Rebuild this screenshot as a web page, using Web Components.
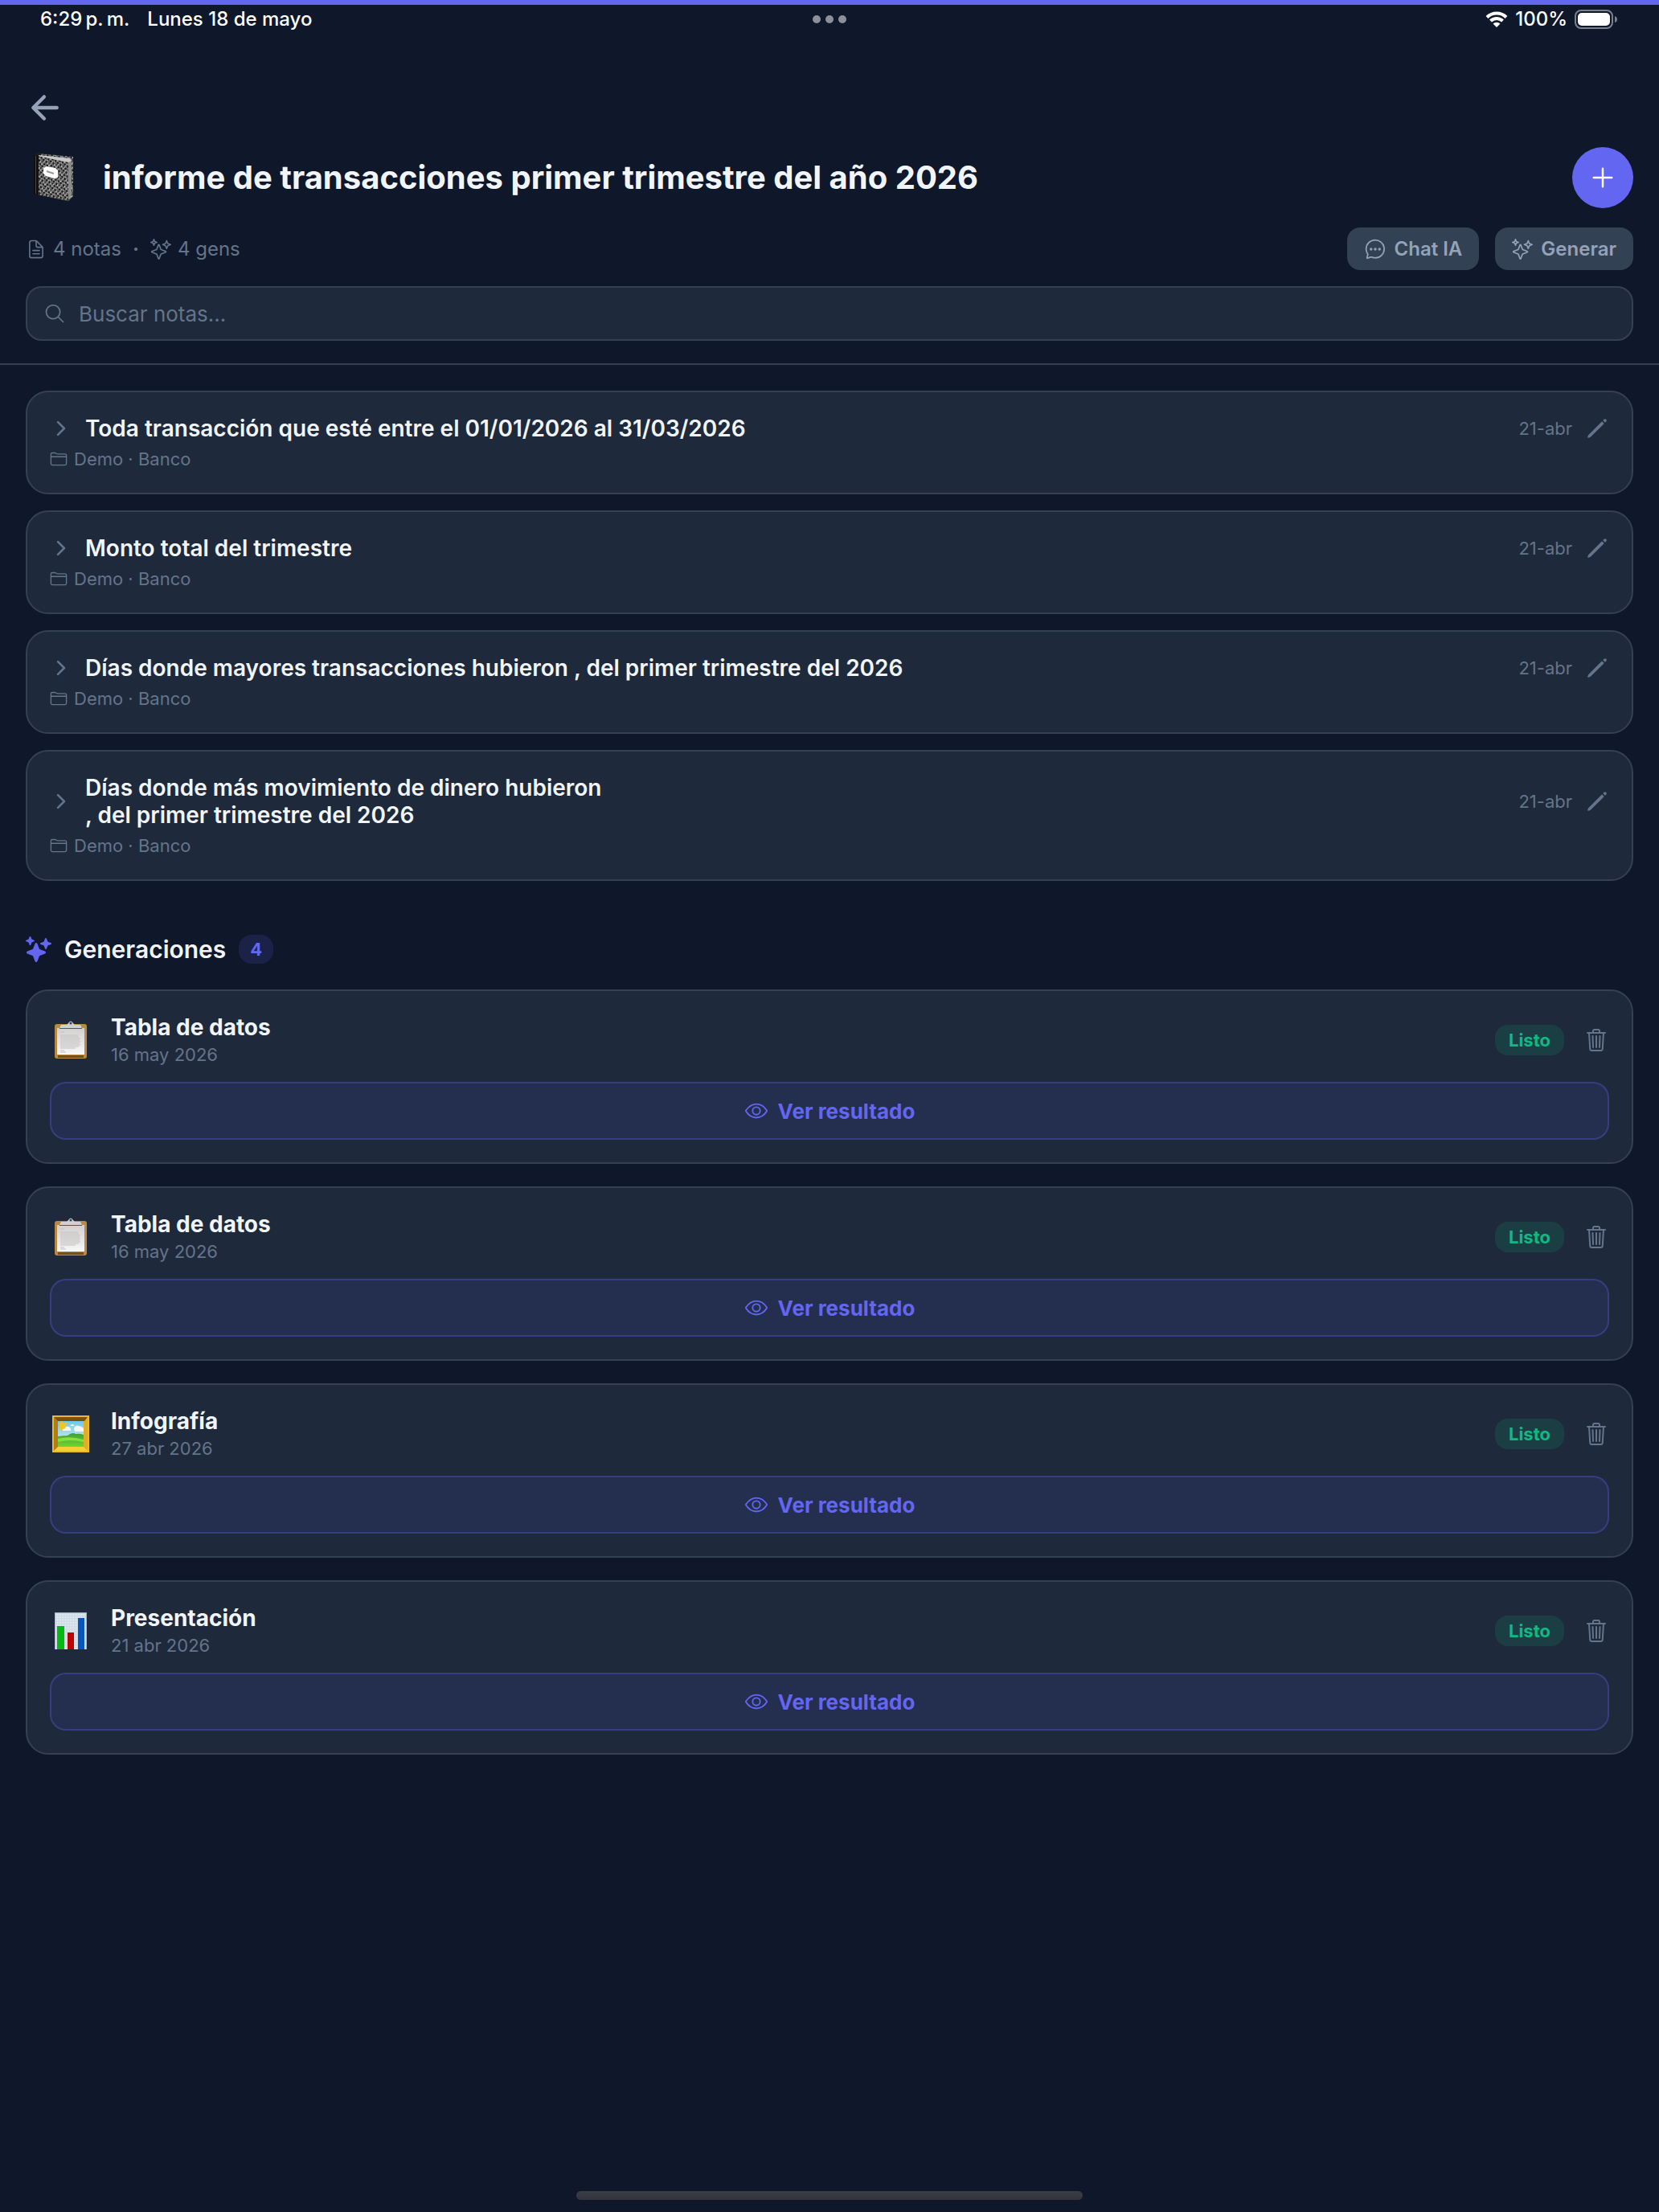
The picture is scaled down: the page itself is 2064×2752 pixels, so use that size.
<!DOCTYPE html>
<html lang="es">
<head>
<meta charset="utf-8">
<meta name="viewport" content="width=device-width, initial-scale=1">
<title>Cuaderno</title>
<style>
    html {
        background: #0f172a;
    }
    body {
        margin: 0;
        font-family: Inter, "Liberation Sans", sans-serif;
        color: #f1f5f9;
        --bg: #0f172a;
        --card: #1e293b;
        --border: #334155;
        --muted: #64748b;
        --soft: #94a3b8;
        --accent: #6366f1;
    }
</style>
</head>
<body>
<notebook-app>
    <status-bar slot="status" time="6:29&#8201;p.&#8201;m." date="Lunes 18 de mayo" battery="100%"></status-bar>
    <notebook-header slot="header" notes="4" gens="4">informe de transacciones primer trimestre del año 2026</notebook-header>

    <note-card folder="Demo · Banco" date="21-abr">Toda transacción que esté entre el 01/01/2026 al 31/03/2026</note-card>
    <note-card folder="Demo · Banco" date="21-abr">Monto total del trimestre</note-card>
    <note-card folder="Demo · Banco" date="21-abr">Días donde mayores transacciones hubieron , del primer trimestre del 2026</note-card>
    <note-card folder="Demo · Banco" date="21-abr">Días donde más movimiento de dinero hubieron<br>, del primer trimestre del 2026</note-card>

    <generation-list slot="generations" count="4">
        <generation-card icon="clipboard" date="16 may 2026">Tabla de datos</generation-card>
        <generation-card icon="clipboard" date="16 may 2026">Tabla de datos</generation-card>
        <generation-card icon="picture" date="27 abr 2026">Infografía</generation-card>
        <generation-card icon="chart" date="21 abr 2026">Presentación</generation-card>
    </generation-list>
</notebook-app>

<script>
// line icons, drawn on a 512 grid
const ICONS = {
    back: '<g stroke-width="48"><path d="M244 400 100 256 244 112"/><path d="M120 256H412"/></g>',
    add: '<path d="M256 112V400M400 256H112"/>',
    document: '<path d="M416 221.25V416a48 48 0 0 1-48 48H144a48 48 0 0 1-48-48V96a48 48 0 0 1 48-48h98.75a32 32 0 0 1 22.62 9.37l141.26 141.26A32 32 0 0 1 416 221.25Z"/><path d="M256 56v120a32 32 0 0 0 32 32h120M176 288h160M176 368h160"/>',
    sparkles: '<path d="M259.92 262.91 216.4 149.77a9 9 0 0 0-16.8 0l-43.52 113.14a9 9 0 0 1-5.17 5.17L37.77 311.6a9 9 0 0 0 0 16.8l113.14 43.52a9 9 0 0 1 5.17 5.17l43.52 113.14a9 9 0 0 0 16.8 0l43.52-113.14a9 9 0 0 1 5.17-5.17l113.14-43.52a9 9 0 0 0 0-16.8l-113.14-43.52a9 9 0 0 1-5.17-5.17Z"/><path d="M108 68 88 16 68 68 16 88l52 20 20 52 20-52 52-20ZM426.67 117.33 400 48l-26.67 69.33L304 144l69.33 26.67L400 240l26.67-69.33L496 144Z"/>',
    sparklesFill: '<g fill="currentColor" stroke="none"><path d="M208 512a24.84 24.84 0 0 1-23.34-16l-39.84-103.6a16.06 16.06 0 0 0-9.19-9.19L32 343.34a25 25 0 0 1 0-46.68l103.6-39.84a16.06 16.06 0 0 0 9.19-9.19L184.66 144a25 25 0 0 1 46.68 0l39.84 103.6a16.06 16.06 0 0 0 9.19 9.19l103 39.63A25.49 25.49 0 0 1 400 320.52a24.82 24.82 0 0 1-16 22.82l-103.6 39.84a16.06 16.06 0 0 0-9.19 9.19L231.34 496A24.84 24.84 0 0 1 208 512Z"/><path d="M88 176a14.67 14.67 0 0 1-13.69-9.4l-16.86-43.84a7.28 7.28 0 0 0-4.21-4.21L9.4 101.69a14.67 14.67 0 0 1 0-27.38l43.84-16.86a7.31 7.31 0 0 0 4.21-4.21L74.16 9.79A15 15 0 0 1 86.23.11a14.67 14.67 0 0 1 15.46 9.29l16.86 43.84a7.31 7.31 0 0 0 4.21 4.21l43.84 16.86a14.67 14.67 0 0 1 0 27.38l-43.84 16.86a7.28 7.28 0 0 0-4.21 4.21l-16.86 43.84A14.67 14.67 0 0 1 88 176Z"/><path d="M400 256a16 16 0 0 1-14.93-10.26l-22.84-59.37a8 8 0 0 0-4.6-4.6l-59.37-22.84a16 16 0 0 1 0-29.86l59.37-22.84a8 8 0 0 0 4.6-4.6l22.67-58.95a16.45 16.45 0 0 1 13.17-10.57 16 16 0 0 1 16.86 10.15l22.84 59.37a8 8 0 0 0 4.6 4.6l59.37 22.84a16 16 0 0 1 0 29.86l-59.37 22.84a8 8 0 0 0-4.6 4.6l-22.84 59.37A16 16 0 0 1 400 256Z"/></g>',
    chat: '<path d="M87.48 380c1.2-4.38-1.43-10.47-3.94-14.86a42.63 42.63 0 0 0-2.54-3.8A199.81 199.81 0 0 1 48 250.2C47.72 139.13 139.6 48 253.52 48 352.71 48 435.41 117.55 454.7 210.24A203 203 0 0 1 459 251.67c0 111.37-88.78 202.92-202.59 202.92-18.2 0-42.12-4.55-55.26-8.2s-26.2-8.46-29.56-9.78a31.08 31.08 0 0 0-11.13-2.06 30.09 30.09 0 0 0-12.08 2.43L81.21 462a15.84 15.84 0 0 1-4.61 1.22 9.61 9.61 0 0 1-9.58-9.74 15.85 15.85 0 0 1 .6-3.29Z"/><g fill="currentColor" stroke="none"><circle cx="160" cy="256" r="32"/><circle cx="256" cy="256" r="32"/><circle cx="352" cy="256" r="32"/></g>',
    search: '<circle cx="221" cy="221" r="157"/><path d="M338.3 338.3 448 448"/>',
    chevron: '<path stroke-width="48" d="m184 112 144 144-144 144"/>',
    folder: '<path d="M440 432H72a40 40 0 0 1-40-40V120a40 40 0 0 1 40-40h75.89a40 40 0 0 1 22.19 6.72l27.84 18.56a40 40 0 0 0 22.19 6.72H440a40 40 0 0 1 40 40v240a40 40 0 0 1-40 40ZM32 192h448"/>',
    pencil: '<g fill="currentColor"><path d="M358.62 129.28 86.49 402.08 70 442l39.92-16.49 272.8-272.13Z"/><path d="m413.07 74.84-11.79 11.78 24.1 24.1 11.79-11.79a16.51 16.51 0 0 0 0-23.34l-.75-.75a16.51 16.51 0 0 0-23.35 0Z"/></g>',
    trash: '<path d="m112 112 20 320c.95 18.49 14.4 32 32 32h184c17.67 0 30.87-13.51 32-32l20-320M80 112h352M192 112V72a23.93 23.93 0 0 1 24-24h80a23.93 23.93 0 0 1 24 24v40M256 176v224M184 176l8 224M328 176l-8 224"/>',
    eye: '<path d="M255.66 112c-77.94 0-157.89 45.11-220.83 135.33a16 16 0 0 0-.27 17.77C82.92 340.8 161.8 400 255.66 400c92.84 0 173.34-59.38 221.79-135.25a16.14 16.14 0 0 0 0-17.47C428.89 172.28 347.8 112 255.66 112Z"/><circle cx="256" cy="256" r="80"/>'
};

// colour pictures, each on its own grid
const PICTURES = {
    notebook: `
        <svg viewBox="0 0 52 64" width="52" height="64">
            <defs>
                <pattern id="speckle" width="9" height="8" patternUnits="userSpaceOnUse" patternTransform="rotate(12)">
                    <rect width="9" height="8" fill="#6b6b6b"/>
                    <path fill="#171717" d="M0 0h2v2H0zM4 1h2v1H4zM7 3h2v2H7zM2 4h2v2H2zM5 6h2v2H5zM0 7h1v1H0z"/>
                    <path fill="#d4d4d4" d="M2 1h1v2H2zM6 2h1v1H6zM4 4h2v1H4zM1 6h1v1H1zM8 6h1v1H8zM7 0h1v1H7z"/>
                </pattern>
            </defs>
            <path fill="#1b1b1b" d="M4 1 50 6V55L44 62 1 52V4Z"/>
            <path fill="url(#speckle)" d="m8 2 42 4v49l-6 6Z"/>
            <path fill="#c8c8c8" d="M7 4 46 8l2 3v45l-4 3-1-46L7 7Z"/>
            <path fill="#8b8b8b" d="m44 13 4-2v44l-4 4Z"/>
            <path fill="url(#speckle)" d="m6 5 38 8v48L6 53Z"/>
            <path fill="#111" d="m1 4 6 1v48l-6-1Z"/>
            <path fill="#454545" d="M3 5h1v47H3z"/>
            <path fill="#fff" d="m17 18 11 2 3 3v9l-4 1-11-3-3-3v-7Z"/>
            <path fill="none" stroke="#999" stroke-width="2" d="m17 24 9 3"/>
        </svg>`,
    clipboard: `
        <svg viewBox="0 0 48 48" width="48" height="48">
            <defs>
                <linearGradient id="paper" x2="0" y2="1"><stop stop-color="#d2d0cf"/><stop offset="1" stop-color="#f8f8f8"/></linearGradient>
            </defs>
            <rect x="4" y="4" width="40" height="43" rx="3" fill="#b98a45"/>
            <path fill="#74501f" d="M8 43h32v3H8z"/>
            <path fill="url(#paper)" d="M7 9h34v33H7z"/>
            <g stroke="#c3c1c0"><path d="M11 14h5M11 18h22M11 20h23M11 22h25M11 24h24M11 26h25M11 28h24M11 30h25M11 32h23M11 34h19M11 37h5M11 39h7"/></g>
            <path fill="#6f5143" d="M10 8h28v2H10z"/>
            <path fill="#cfd1d5" d="M12 5h7l3-3a3 3 0 0 1 4 0l3 3h7l2 4H10Z"/>
            <circle cx="24" cy="3" r="2" fill="#35414d" stroke="#b9c8d6"/>
        </svg>`,
    picture: `
        <svg viewBox="0 0 48 48" width="48" height="48">
            <defs>
                <linearGradient id="sky" x2="0" y2="1"><stop stop-color="#6fc8e6"/><stop offset="1" stop-color="#e6f2f5"/></linearGradient>
                <linearGradient id="grass" x2="0" y2="1"><stop stop-color="#3f9e3b"/><stop offset="1" stop-color="#72d62c"/></linearGradient>
            </defs>
            <path fill="#e2ad24" d="M1 1h46v46H1z"/>
            <path fill="#7d500f" d="M3 3h42l-4 5H7Z"/>
            <path fill="#b47b17" d="m3 3 5 5v33l-5 4Z"/>
            <path fill="#f5d03a" d="m3 45 5-5h32l5 5Z"/>
            <path fill="none" stroke="#f0c63c" d="M2 2h44v44H2z"/>
            <path fill="url(#sky)" d="M8 8h32v32H8z"/>
            <path fill="#f4f6f9" d="M14 20a4 4 0 0 1 5-5 4 4 0 0 1 5 5ZM29 20a4 4 0 0 1 5-6q3 0 6 3v4H29ZM23 14q3-4 6 0Z"/>
            <circle cx="14" cy="14" r="4" fill="#f6c51c"/>
            <path stroke="#f6c51c" stroke-width="2" d="m9 10 2 1M13 8v2M19 10l-2 2M9 16h2M13 20v-2"/>
            <path fill="url(#grass)" d="M8 27q7-1 12-1 6-5 10-2 5-1 10 1v15H8Z"/>
            <path fill="#86df3c" d="M8 30q14-4 32 1v3q-16-4-32 0Z"/>
        </svg>`,
    chart: `
        <svg viewBox="0 0 48 48" width="48" height="48">
            <defs>
                <pattern id="grid" width="2" height="2" patternUnits="userSpaceOnUse">
                    <path fill="#eef4f8" d="M0 0h2v2H0z"/>
                    <path fill="#ccd8e2" d="M0 0h2v1H0zM0 0h1v2H0z"/>
                </pattern>
            </defs>
            <path fill="#aab4be" d="M4 1h40v46H4z"/>
            <path fill="url(#grid)" d="M5 2h38v45H5z"/>
            <path fill="#04b916" d="M7 18h9v29H7z"/>
            <path fill="#ba0404" d="M20 26h8v21h-8z"/>
            <path fill="#0756bd" d="M33 8h8v39h-8z"/>
        </svg>`
};

class AppIcon extends HTMLElement {
    connectedCallback() {
        const name = this.getAttribute('name');
        const size = parseInt(this.getAttribute('size')) || 28;

        this.attachShadow({ mode: 'open' }).innerHTML = `
            <style>
                :host {
                    display: block;
                    flex: none;
                }
                svg {
                    display: block;
                }
            </style>
            <svg viewBox="0 0 512 512" width="${size}" height="${size}" fill="none" stroke="currentColor"
                 stroke-width="32" stroke-linecap="round" stroke-linejoin="round" aria-hidden="true">${ICONS[name]}</svg>
        `;
    }
}
customElements.define('app-icon', AppIcon);

class StatusBar extends HTMLElement {
    connectedCallback() {
        this.attachShadow({ mode: 'open' }).innerHTML = `
            <style>
                :host {
                    display: grid;
                    grid-template-columns: 1fr auto 1fr;
                    align-items: center;
                    height: 36px;
                    padding: 0 50px;
                    border-top: 6px solid var(--accent);
                    color: #fff;
                    font-size: 24px;
                    line-height: 36px;
                    font-weight: 500;
                }
                .left, .right, .dots {
                    display: flex;
                    align-items: center;
                }
                .left {
                    gap: 22px;
                }
                .right {
                    justify-content: flex-end;
                    gap: 9px;
                }
                .dots {
                    gap: 6px;
                }
                .dots i {
                    width: 10px;
                    height: 10px;
                    border-radius: 50%;
                    background: #8b909b;
                }
            </style>
            <div class="left"><span>${this.getAttribute('time')}</span><span>${this.getAttribute('date')}</span></div>
            <div class="dots"><i></i><i></i><i></i></div>
            <div class="right">
                <svg width="28" height="20" viewBox="0 0 28 20" fill="none" stroke="#fff" stroke-width="4" aria-hidden="true">
                    <path d="M2 7.5a17 17 0 0 1 24 0M6.5 12a10.6 10.6 0 0 1 15 0"/>
                    <path fill="#fff" stroke="none" d="m14 20-4.5-4.5a6.4 6.4 0 0 1 9 0Z"/>
                </svg>
                <span>${this.getAttribute('battery')}</span>
                <svg width="55" height="24" viewBox="0 0 55 24" aria-hidden="true">
                    <rect x="1" y="1" width="46" height="22" rx="7" fill="none" stroke="#7b808d" stroke-width="2"/>
                    <rect x="4" y="4" width="40" height="16" rx="5" fill="#fff"/>
                    <path fill="#7b808d" d="M50 8q3 1 3 4t-3 4Z"/>
                </svg>
            </div>
        `;
    }
}
customElements.define('status-bar', StatusBar);

class NotebookHeader extends HTMLElement {
    connectedCallback() {
        this.attachShadow({ mode: 'open' }).innerHTML = `
            <style>
                :host {
                    display: block;
                    padding: 68px 32px 28px;
                    border-bottom: 2px solid var(--border);
                }
                button {
                    font: inherit;
                    color: inherit;
                    border: 0;
                    padding: 0;
                    background: none;
                }
                .back {
                    display: block;
                    color: var(--soft);
                }
                .title-row {
                    display: flex;
                    align-items: center;
                    margin-top: 25px;
                }
                .cover {
                    flex: none;
                    width: 52px;
                    margin: 0 35px 0 9px;
                }
                .cover svg {
                    display: block;
                }
                h1 {
                    flex: 1;
                    margin: 0;
                    font-size: 40px;
                    line-height: 48px;
                    font-weight: 700;
                }
                .add {
                    display: grid;
                    place-items: center;
                    width: 76px;
                    height: 76px;
                    border-radius: 50%;
                    background: var(--accent);
                    color: #fff;
                }
                .meta-row {
                    display: flex;
                    align-items: center;
                    justify-content: space-between;
                    margin-top: 24px;
                    font-size: 24px;
                    line-height: 29px;
                }
                .meta, .meta span, .actions, .actions button {
                    display: flex;
                    align-items: center;
                }
                .meta {
                    gap: 14px;
                    color: var(--muted);
                }
                .meta span {
                    gap: 8px;
                }
                .actions {
                    gap: 20px;
                    color: var(--soft);
                }
                .actions button {
                    gap: 10px;
                    padding: 12px 21px;
                    border-radius: 16px;
                    background: var(--border);
                    font-weight: 600;
                }
                .search {
                    display: flex;
                    align-items: center;
                    gap: 16px;
                    margin-top: 20px;
                    padding: 0 20px;
                    height: 64px;
                    border: 2px solid var(--border);
                    border-radius: 20px;
                    background: var(--card);
                    color: var(--muted);
                }
                .search input {
                    flex: 1;
                    border: 0;
                    padding: 0;
                    outline: 0;
                    background: none;
                    color: #f1f5f9;
                    font: inherit;
                    font-size: 26px;
                }
                .search input::placeholder {
                    color: var(--muted);
                    opacity: 1;
                }
            </style>
            <button class="back" aria-label="Volver"><app-icon name="back" size="48"></app-icon></button>
            <div class="title-row">
                <div class="cover" aria-hidden="true">${PICTURES.notebook}</div>
                <h1><slot></slot></h1>
                <button class="add" aria-label="Agregar nota"><app-icon name="add" size="40"></app-icon></button>
            </div>
            <div class="meta-row">
                <div class="meta">
                    <span><app-icon name="document" size="26"></app-icon>${this.getAttribute('notes')} notas</span>
                    <b>·</b>
                    <span><app-icon name="sparkles" size="26"></app-icon>${this.getAttribute('gens')} gens</span>
                </div>
                <div class="actions">
                    <button><app-icon name="chat" size="28"></app-icon>Chat IA</button>
                    <button><app-icon name="sparkles" size="26"></app-icon>Generar</button>
                </div>
            </div>
            <label class="search">
                <app-icon name="search" size="28"></app-icon>
                <input type="search" placeholder="Buscar notas..." aria-label="Buscar notas">
            </label>
        `;
    }
}
customElements.define('notebook-header', NotebookHeader);

class NoteCard extends HTMLElement {
    connectedCallback() {
        this.attachShadow({ mode: 'open' }).innerHTML = `
            <style>
                :host {
                    display: block;
                    padding: 28px;
                    border: 2px solid var(--border);
                    border-radius: 28px;
                    background: var(--card);
                }
                .row, .folder {
                    display: flex;
                    align-items: center;
                    color: var(--muted);
                }
                h2 {
                    flex: 1;
                    margin: 0 0 0 16px;
                    font-size: 28px;
                    line-height: 34px;
                    font-weight: 600;
                    color: #f1f5f9;
                }
                time, .folder {
                    font-size: 22px;
                    line-height: 28px;
                }
                button {
                    margin: 0 0 0 16px;
                    padding: 0;
                    border: 0;
                    background: none;
                    color: inherit;
                }
                .folder {
                    gap: 8px;
                    margin-top: 7px;
                }
            </style>
            <div class="row">
                <app-icon name="chevron" size="28"></app-icon>
                <h2><slot></slot></h2>
                <time>${this.getAttribute('date')}</time>
                <button aria-label="Editar nota"><app-icon name="pencil" size="30"></app-icon></button>
            </div>
            <div class="folder"><app-icon name="folder" size="22"></app-icon>${this.getAttribute('folder')}</div>
        `;
    }
}
customElements.define('note-card', NoteCard);

class GenerationList extends HTMLElement {
    connectedCallback() {
        this.attachShadow({ mode: 'open' }).innerHTML = `
            <style>
                :host {
                    display: flex;
                    flex-direction: column;
                    gap: 28px;
                }
                header {
                    display: flex;
                    align-items: center;
                    gap: 16px;
                    margin-bottom: 4px;
                }
                app-icon {
                    color: var(--accent);
                }
                h2 {
                    margin: 0;
                    font-size: 30px;
                    line-height: 36px;
                    font-weight: 600;
                }
                .count {
                    padding: 4px 14px;
                    border-radius: 16px;
                    background: rgba(99, 102, 241, 0.15);
                    color: var(--accent);
                    font-size: 22px;
                    line-height: 28px;
                    font-weight: 700;
                }
            </style>
            <header>
                <app-icon name="sparklesFill" size="32"></app-icon>
                <h2>Generaciones</h2>
                <span class="count">${this.getAttribute('count')}</span>
            </header>
            <slot></slot>
        `;
    }
}
customElements.define('generation-list', GenerationList);

class GenerationCard extends HTMLElement {
    connectedCallback() {
        this.attachShadow({ mode: 'open' }).innerHTML = `
            <style>
                :host {
                    display: block;
                    padding: 28px;
                    border: 2px solid var(--border);
                    border-radius: 28px;
                    background: var(--card);
                }
                .row {
                    display: flex;
                    align-items: center;
                    height: 65px;
                }
                .picture {
                    flex: none;
                    margin: 0 26px 0 2px;
                }
                .picture svg {
                    display: block;
                }
                .text {
                    flex: 1;
                }
                h3 {
                    margin: 0 0 2px;
                    font-size: 28px;
                    line-height: 34px;
                    font-weight: 700;
                }
                time {
                    display: block;
                    font-size: 22px;
                    line-height: 30px;
                    color: var(--muted);
                }
                .state {
                    padding: 5px 17px;
                    border-radius: 16px;
                    background: rgba(16, 185, 129, 0.15);
                    color: #10b981;
                    font-size: 22px;
                    line-height: 28px;
                    font-weight: 700;
                }
                button {
                    border: 0;
                    padding: 0;
                    background: none;
                    color: var(--muted);
                    font: inherit;
                }
                .delete {
                    margin-left: 24px;
                }
                .view {
                    display: flex;
                    align-items: center;
                    justify-content: center;
                    gap: 12px;
                    width: 100%;
                    height: 72px;
                    margin-top: 20px;
                    border: 2px solid rgba(99, 102, 241, 0.3);
                    border-radius: 20px;
                    background: rgba(99, 102, 241, 0.1);
                    color: var(--accent);
                    font-size: 26px;
                    font-weight: 700;
                }
            </style>
            <div class="row">
                <div class="picture" aria-hidden="true">${PICTURES[this.getAttribute('icon')]}</div>
                <div class="text">
                    <h3><slot></slot></h3>
                    <time>${this.getAttribute('date')}</time>
                </div>
                <span class="state">Listo</span>
                <button class="delete" aria-label="Eliminar"><app-icon name="trash" size="32"></app-icon></button>
            </div>
            <button class="view"><app-icon name="eye" size="30"></app-icon>Ver resultado</button>
        `;
    }
}
customElements.define('generation-card', GenerationCard);

class NotebookApp extends HTMLElement {
    connectedCallback() {
        this.attachShadow({ mode: 'open' }).innerHTML = `
            <style>
                :host {
                    display: flex;
                    flex-direction: column;
                    min-height: 100vh;
                    background: var(--bg);
                }
                main {
                    padding: 32px;
                }
                .notes {
                    display: flex;
                    flex-direction: column;
                    gap: 20px;
                    margin-bottom: 67px;
                }
                .home {
                    width: 30.5%;
                    height: 11px;
                    margin: auto auto 15px;
                    border-radius: 6px;
                    background: linear-gradient(#3b3e42, #31343f);
                }
            </style>
            <slot name="status"></slot>
            <slot name="header"></slot>
            <main>
                <div class="notes"><slot></slot></div>
                <slot name="generations"></slot>
            </main>
            <div class="home"></div>
        `;
    }
}
customElements.define('notebook-app', NotebookApp);
</script>
</body>
</html>
